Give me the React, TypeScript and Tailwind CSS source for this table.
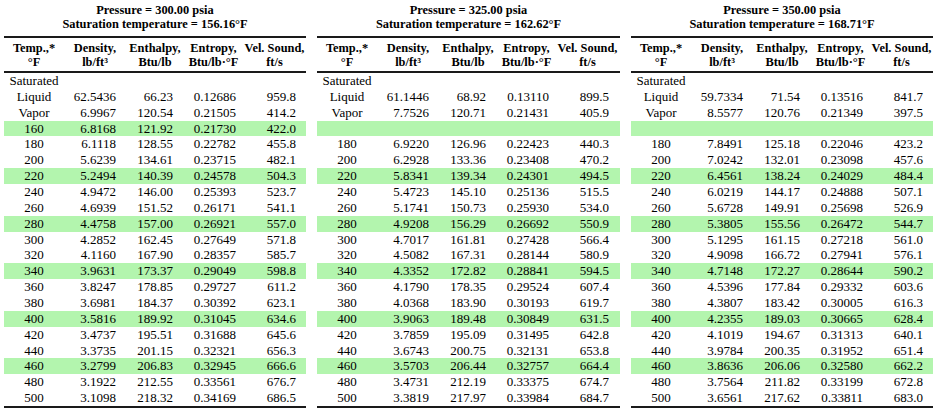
import React from "react";

type Row = [string, string, string, string, string];

const green = new Set(["160", "220", "280", "340", "400", "460"]);

const t1: Row[] = [
  ["160", "6.8168", "121.92", "0.21730", "422.0"],
  ["180", "6.1118", "128.55", "0.22782", "455.8"],
  ["200", "5.6239", "134.61", "0.23715", "482.1"],
  ["220", "5.2494", "140.39", "0.24578", "504.3"],
  ["240", "4.9472", "146.00", "0.25393", "523.7"],
  ["260", "4.6939", "151.52", "0.26171", "541.1"],
  ["280", "4.4758", "157.00", "0.26921", "557.0"],
  ["300", "4.2852", "162.45", "0.27649", "571.8"],
  ["320", "4.1160", "167.90", "0.28357", "585.7"],
  ["340", "3.9631", "173.37", "0.29049", "598.8"],
  ["360", "3.8247", "178.85", "0.29727", "611.2"],
  ["380", "3.6981", "184.37", "0.30392", "623.1"],
  ["400", "3.5816", "189.92", "0.31045", "634.6"],
  ["420", "3.4737", "195.51", "0.31688", "645.6"],
  ["440", "3.3735", "201.15", "0.32321", "656.3"],
  ["460", "3.2799", "206.83", "0.32945", "666.6"],
  ["480", "3.1922", "212.55", "0.33561", "676.7"],
  ["500", "3.1098", "218.32", "0.34169", "686.5"],
];

const t2: Row[] = [
  ["160", "", "", "", ""],
  ["180", "6.9220", "126.96", "0.22423", "440.3"],
  ["200", "6.2928", "133.36", "0.23408", "470.2"],
  ["220", "5.8341", "139.34", "0.24301", "494.5"],
  ["240", "5.4723", "145.10", "0.25136", "515.5"],
  ["260", "5.1741", "150.73", "0.25930", "534.0"],
  ["280", "4.9208", "156.29", "0.26692", "550.9"],
  ["300", "4.7017", "161.81", "0.27428", "566.4"],
  ["320", "4.5082", "167.31", "0.28144", "580.9"],
  ["340", "4.3352", "172.82", "0.28841", "594.5"],
  ["360", "4.1790", "178.35", "0.29524", "607.4"],
  ["380", "4.0368", "183.90", "0.30193", "619.7"],
  ["400", "3.9063", "189.48", "0.30849", "631.5"],
  ["420", "3.7859", "195.09", "0.31495", "642.8"],
  ["440", "3.6743", "200.75", "0.32131", "653.8"],
  ["460", "3.5703", "206.44", "0.32757", "664.4"],
  ["480", "3.4731", "212.19", "0.33375", "674.7"],
  ["500", "3.3819", "217.97", "0.33984", "684.7"],
];

const t3: Row[] = [
  ["160", "", "", "", ""],
  ["180", "7.8491", "125.18", "0.22046", "423.2"],
  ["200", "7.0242", "132.01", "0.23098", "457.6"],
  ["220", "6.4561", "138.24", "0.24029", "484.4"],
  ["240", "6.0219", "144.17", "0.24888", "507.1"],
  ["260", "5.6728", "149.91", "0.25698", "526.9"],
  ["280", "5.3805", "155.56", "0.26472", "544.7"],
  ["300", "5.1295", "161.15", "0.27218", "561.0"],
  ["320", "4.9098", "166.72", "0.27941", "576.1"],
  ["340", "4.7148", "172.27", "0.28644", "590.2"],
  ["360", "4.5396", "177.84", "0.29332", "603.6"],
  ["380", "4.3807", "183.42", "0.30005", "616.3"],
  ["400", "4.2355", "189.03", "0.30665", "628.4"],
  ["420", "4.1019", "194.67", "0.31313", "640.1"],
  ["440", "3.9784", "200.35", "0.31952", "651.4"],
  ["460", "3.8636", "206.06", "0.32580", "662.2"],
  ["480", "3.7564", "211.82", "0.33199", "672.8"],
  ["500", "3.6561", "217.62", "0.33811", "683.0"],
];

type TableProps = {
  pressure: string;
  sat: string;
  liquid: Row;
  vapor: Row;
  rows: Row[];
  width: string;
};

const grid = "grid grid-cols-[60px_62px_58px_59px_63px]";

function DataRow({ r, bg }: { r: Row; bg?: boolean }) {
  const empty = r[1] === "";
  return (
    <div className={`${grid} h-[15.86px] items-center leading-[15.86px] ${bg ? "bg-[#b3f5ae]" : ""}`}>
      <div className="text-center">{empty ? "" : r[0]}</div>
      <div className="text-right pr-[10px]">{r[1]}</div>
      <div className="text-right pr-[11px]">{r[2]}</div>
      <div className="text-right pr-[7px]">{r[3]}</div>
      <div className="text-right pr-[10px]">{r[4]}</div>
    </div>
  );
}

function Table({ pressure, sat, liquid, vapor, rows, width }: TableProps) {
  return (
    <div className={`${width} flex flex-col`}>
      <div className="h-[36px] flex flex-col items-center justify-center font-bold text-[12.4px] leading-[14.5px] pb-[2px]">
        <div>Pressure = {pressure} psia</div>
        <div>Saturation temperature = {sat}°F</div>
      </div>
      <div className="h-[2px] bg-[#1a1a1a]" />
      <div className={`${grid} h-[33px] items-center font-bold text-[12.4px] leading-[14px] text-center`}>
        <div>
          Temp.,*
          <br />
          °F
        </div>
        <div>
          Density,
          <br />
          lb/ft³
        </div>
        <div>
          Enthalpy,
          <br />
          Btu/lb
        </div>
        <div>
          Entropy,
          <br />
          Btu/lb·°F
        </div>
        <div className="whitespace-nowrap">
          Vel. Sound,
          <br />
          ft/s
        </div>
      </div>
      <div className="h-[2px] bg-[#1a1a1a]" />
      <div className="text-[13px]">
        <div className={`${grid} h-[15.86px] items-center leading-[15.86px]`}>
          <div className="text-center">Saturated</div>
        </div>
        <DataRow r={liquid} />
        <DataRow r={vapor} />
        {rows.map((r) => (
          <DataRow key={r[0]} r={r} bg={green.has(r[0])} />
        ))}
      </div>
      <div className="h-[2px] bg-[#1a1a1a]" />
    </div>
  );
}

export default function App() {
  return (
    <div
      className="w-[935px] h-[409px] bg-white text-black overflow-hidden flex gap-[11px] pl-[4px]"
      style={{ fontFamily: '"Liberation Serif", "Times New Roman", serif' }}
    >
      <Table
        pressure="300.00"
        sat="156.16"
        liquid={["Liquid", "62.5436", "66.23", "0.12686", "959.8"]}
        vapor={["Vapor", "6.9967", "120.54", "0.21505", "414.2"]}
        rows={t1}
        width="w-[302px]"
      />
      <Table
        pressure="325.00"
        sat="162.62"
        liquid={["Liquid", "61.1446", "68.92", "0.13110", "899.5"]}
        vapor={["Vapor", "7.7526", "120.71", "0.21431", "405.9"]}
        rows={t2}
        width="w-[303px]"
      />
      <Table
        pressure="350.00"
        sat="168.71"
        liquid={["Liquid", "59.7334", "71.54", "0.13516", "841.7"]}
        vapor={["Vapor", "8.5577", "120.76", "0.21349", "397.5"]}
        rows={t3}
        width="w-[302px]"
      />
    </div>
  );
}
